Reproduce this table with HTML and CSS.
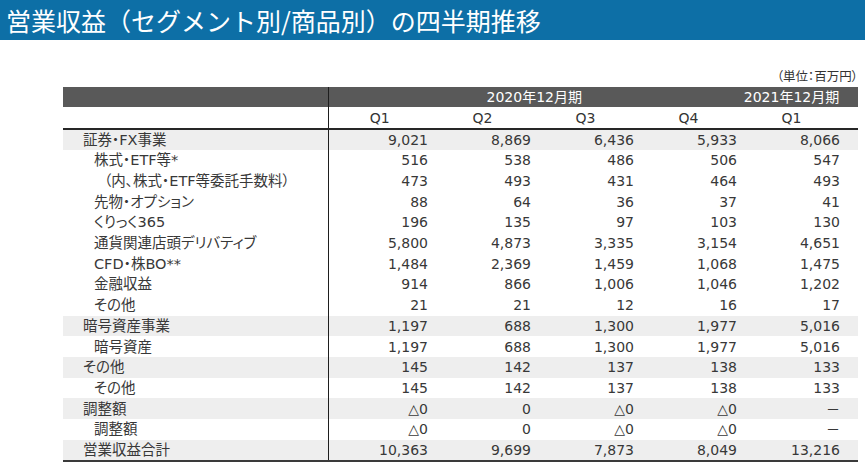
FILE: index.html
```html
<!DOCTYPE html>
<html lang="ja">
<head>
<meta charset="utf-8">
<title>営業収益の四半期推移</title>
<link rel="stylesheet" href="styles.css">
</head>
<body>
<header class="title-bar">
  <h1 class="title">営業収益（セグメント別/商品別）の四半期推移</h1>
</header>
<main class="content">
  <div class="unit">（単位：百万円）</div>
  <table class="report">
    <colgroup>
      <col class="c-label"><col class="c-num"><col class="c-num"><col class="c-num"><col class="c-num"><col class="c-last">
    </colgroup>
    <thead>
      <tr class="period">
        <th class="label"></th>
        <th colspan="4">2020年12月期</th>
        <th class="last">2021年12月期</th>
      </tr>
      <tr class="quarter">
        <th class="label"></th>
        <th>Q1</th><th>Q2</th><th>Q3</th><th>Q4</th><th class="last">Q1</th>
      </tr>
    </thead>
    <tbody>
      <tr class="seg"><td class="label">証券・FX事業</td><td>9,021</td><td>8,869</td><td>6,436</td><td>5,933</td><td class="last">8,066</td></tr>
      <tr class="sub"><td class="label">株式・ETF等*</td><td>516</td><td>538</td><td>486</td><td>506</td><td class="last">547</td></tr>
      <tr class="sub2"><td class="label">（内、株式・ETF等委託手数料）</td><td>473</td><td>493</td><td>431</td><td>464</td><td class="last">493</td></tr>
      <tr class="sub"><td class="label">先物・オプション</td><td>88</td><td>64</td><td>36</td><td>37</td><td class="last">41</td></tr>
      <tr class="sub"><td class="label">くりっく365</td><td>196</td><td>135</td><td>97</td><td>103</td><td class="last">130</td></tr>
      <tr class="sub"><td class="label">通貨関連店頭デリバティブ</td><td>5,800</td><td>4,873</td><td>3,335</td><td>3,154</td><td class="last">4,651</td></tr>
      <tr class="sub"><td class="label">CFD・株BO**</td><td>1,484</td><td>2,369</td><td>1,459</td><td>1,068</td><td class="last">1,475</td></tr>
      <tr class="sub"><td class="label">金融収益</td><td>914</td><td>866</td><td>1,006</td><td>1,046</td><td class="last">1,202</td></tr>
      <tr class="sub"><td class="label">その他</td><td>21</td><td>21</td><td>12</td><td>16</td><td class="last">17</td></tr>
      <tr class="seg"><td class="label">暗号資産事業</td><td>1,197</td><td>688</td><td>1,300</td><td>1,977</td><td class="last">5,016</td></tr>
      <tr class="sub"><td class="label">暗号資産</td><td>1,197</td><td>688</td><td>1,300</td><td>1,977</td><td class="last">5,016</td></tr>
      <tr class="seg"><td class="label">その他</td><td>145</td><td>142</td><td>137</td><td>138</td><td class="last">133</td></tr>
      <tr class="sub"><td class="label">その他</td><td>145</td><td>142</td><td>137</td><td>138</td><td class="last">133</td></tr>
      <tr class="seg"><td class="label">調整額</td><td>△0</td><td>0</td><td>△0</td><td>△0</td><td class="last">－</td></tr>
      <tr class="sub"><td class="label">調整額</td><td>△0</td><td>0</td><td>△0</td><td>△0</td><td class="last">－</td></tr>
      <tr class="seg total"><td class="label">営業収益合計</td><td>10,363</td><td>9,699</td><td>7,873</td><td>8,049</td><td class="last">13,216</td></tr>
    </tbody>
  </table>
</main>
</body>
</html>
```

FILE: styles.css
```css
* { box-sizing: border-box; }

html, body {
  margin: 0;
  padding: 0;
  background: #ffffff;
}

body {
  width: 865px;
  height: 467px;
  overflow: hidden;
  font-family: "DejaVu Sans", "Noto Sans CJK JP", sans-serif;
  color: #333333;
}

.title-bar {
  height: 40px;
  background: #0d6fa6;
  display: flex;
  align-items: center;
  padding-left: 6px;
}

.title {
  margin: 0;
  font-family: "Noto Sans CJK JP", sans-serif;
  font-size: 25px;
  font-weight: 400;
  color: #ffffff;
  line-height: 40px;
  white-space: nowrap;
}

.content {
  padding: 29px 7px 0 63px;
}

.unit {
  text-align: right;
  font-family: "Noto Sans CJK JP", sans-serif;
  font-feature-settings: "palt";
  font-size: 12.5px;
  line-height: 14px;
  margin-bottom: 4px;
  color: #333333;
}

.report {
  border-collapse: collapse;
  table-layout: fixed;
  width: 795px;
  font-size: 14px;
  font-feature-settings: "palt";
}

.c-label { width: 265px; }
.c-num { width: 103px; }
.c-last { width: 118px; }

.report th,
.report td {
  padding: 0;
  white-space: nowrap;
  font-weight: 400;
}

.report .label {
  border-right: 1px solid #1e1e1e;
  text-align: left;
}

.period th {
  height: 20px;
  background: #595959;
  color: #ffffff;
  text-align: center;
  line-height: 20px;
}

.quarter th {
  height: 22px;
  text-align: center;
  line-height: 20px;
  border-bottom: 2px solid #262626;
  color: #333333;
}

.report th.last {
  padding-right: 15px;
}

.report tbody td {
  height: 20.7px;
  line-height: 20px;
  text-align: right;
  padding-right: 3px;
  color: #383838;
}

.report tbody td.last {
  padding-right: 18px;
}

.report tbody td.label {
  padding-right: 0;
  text-align: left;
  font-size: 14.5px;
}

.seg td { background: #eeeeee; }
.seg td.label { padding-left: 20px; }
.sub td.label { padding-left: 31px; }
.sub2 td.label { padding-left: 41px; }

.total td {
  border-bottom: 2px solid #3a3a3a;
}
```
